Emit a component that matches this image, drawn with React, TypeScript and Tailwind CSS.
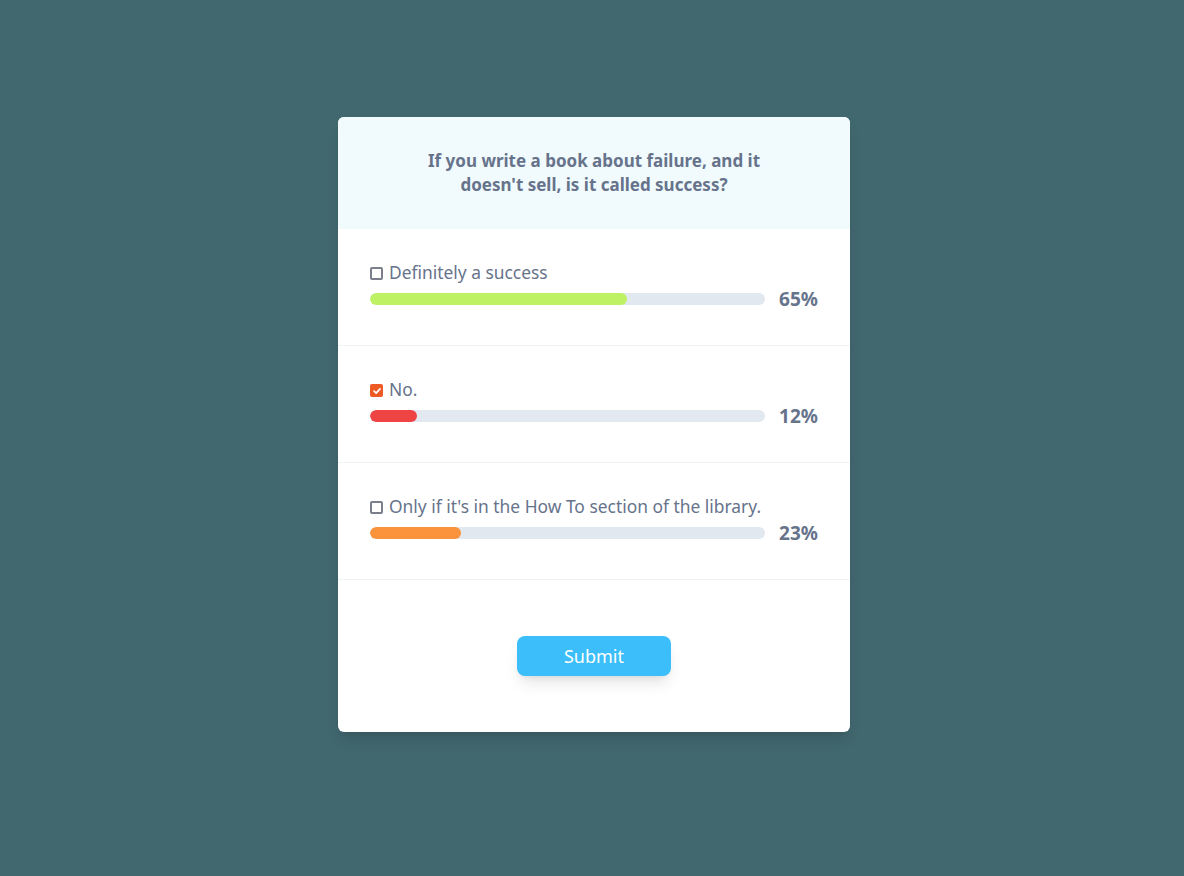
const options = [
  { label: "Definitely a success", percent: 65, bar: "bg-[#bef264]", checked: false },
  { label: "No.", percent: 12, bar: "bg-[#ef4444]", checked: true },
  { label: "Only if it's in the How To section of the library.", percent: 23, bar: "bg-[#fb923c]", checked: false },
];

function Checkbox({ checked }: { checked: boolean }) {
  if (checked) {
    return (
      <span className="mt-[2px] flex h-[13px] w-[13px] items-center justify-center rounded-[2px] bg-[#ee5a24]">
        <svg viewBox="0 0 12 12" className="h-[10px] w-[10px]" fill="none" stroke="white" strokeWidth="2" strokeLinecap="round" strokeLinejoin="round">
          <path d="M2.5 6.2 5 8.6 9.6 3.4" />
        </svg>
      </span>
    );
  }
  return <span className="mt-[2px] block h-[13px] w-[13px] rounded-[2px] border-2 border-[#7b7f8c] bg-white" />;
}

export default function App() {
  return (
    <div
      className="min-h-screen w-full bg-[#41676f] pt-[117px] pl-[338px]"
      style={{ fontFamily: '"Noto Sans", sans-serif' }}
    >
      <div className="w-[512px] overflow-hidden rounded-md bg-white shadow-lg">
        <div className="bg-[#f1fbfe] px-8 py-8 text-center text-[17px] font-bold leading-6 text-[#66738b]">
          If you write a book about failure, and it
          <br />
          doesn't sell, is it called success?
        </div>

        {options.map((o) => (
          <div key={o.label} className="border-b border-[#f1f2f4] px-8 pt-[31px] pb-[32px]">
            <label className="flex h-[25px] items-center gap-[6px] text-[17.4px] text-[#66738b]">
              <Checkbox checked={o.checked} />
              <span>{o.label}</span>
            </label>
            <div className="flex h-7 items-center">
              <div className="h-3 flex-1 overflow-hidden rounded-full bg-[#e2e8f0]">
                <div className={`h-3 rounded-full ${o.bar}`} style={{ width: `${o.percent}%` }} />
              </div>
              <span className="ml-3 w-[41px] text-right text-[19px] font-bold text-[#66738b]">{o.percent}%</span>
            </div>
          </div>
        ))}

        <div className="flex justify-center py-14">
          <button
            type="button"
            className="h-10 w-[154px] rounded-lg bg-[#3bbefa] text-lg text-white shadow-lg"
          >
            Submit
          </button>
        </div>
      </div>
    </div>
  );
}
